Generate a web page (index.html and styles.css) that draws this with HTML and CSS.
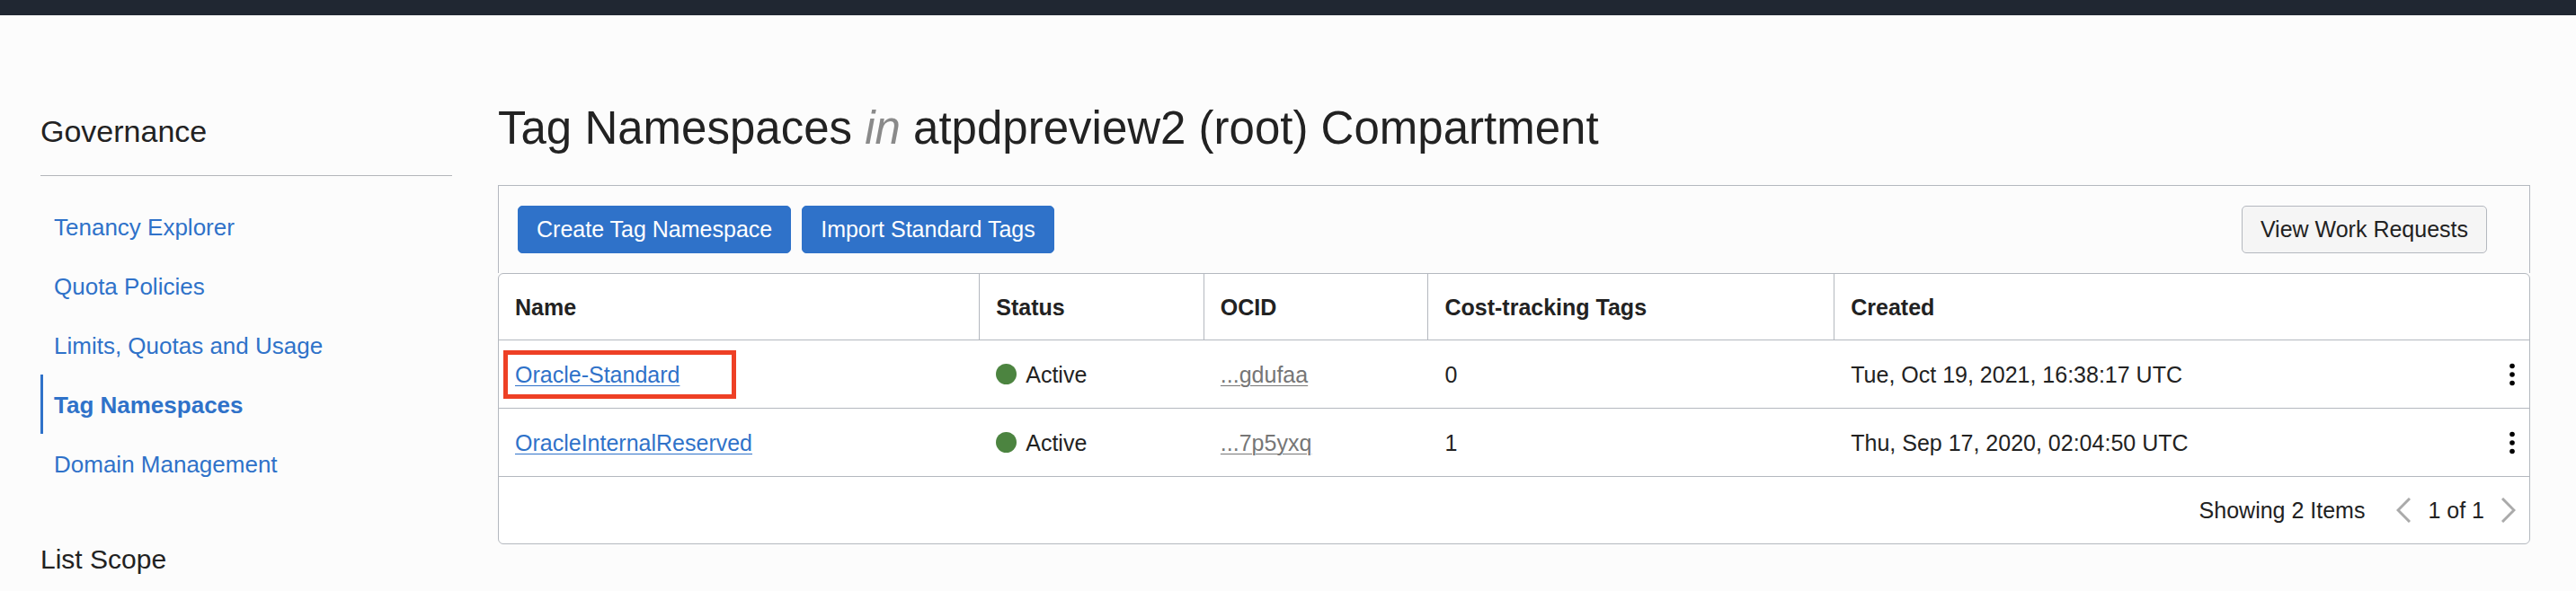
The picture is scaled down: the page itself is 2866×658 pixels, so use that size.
FILE: index.html
```html
<!DOCTYPE html>
<html lang="en">
<head>
<meta charset="utf-8">
<title>Tag Namespaces</title>
<link rel="stylesheet" href="styles.css">
</head>
<body>
<header class="topbar"></header>
<div class="layout">
  <aside class="sidebar">
    <h2 class="sidebar-title">Governance</h2>
    <nav class="nav" aria-label="Governance">
      <a class="nav-link" href="#explorer">Tenancy Explorer</a>
      <a class="nav-link" href="#quota">Quota Policies</a>
      <a class="nav-link" href="#limits">Limits, Quotas and Usage</a>
      <a class="nav-link active" href="#tags" aria-current="page">Tag Namespaces</a>
      <a class="nav-link" href="#domains">Domain Management</a>
    </nav>
    <h3 class="scope-title">List Scope</h3>
  </aside>
  <main class="main">
    <h1 class="title">Tag Namespaces <em class="title-in">in</em> atpdpreview2 (root) Compartment</h1>
    <div class="toolbar">
      <button class="btn primary" type="button">Create Tag Namespace</button>
      <button class="btn primary" type="button">Import Standard Tags</button>
      <button class="btn secondary" type="button">View Work Requests</button>
    </div>
    <section class="panel">
      <table class="grid">
        <colgroup>
          <col class="col-name"><col class="col-status"><col class="col-ocid"><col class="col-cost"><col><col class="col-actions">
        </colgroup>
        <thead>
          <tr><th>Name</th><th>Status</th><th>OCID</th><th>Cost-tracking Tags</th><th colspan="2">Created</th></tr>
        </thead>
        <tbody>
          <tr>
            <td class="marked"><a class="name-link" href="#standard">Oracle-Standard</a></td>
            <td><span class="status"><span class="dot"></span>Active</span></td>
            <td><a class="ocid" href="#ocid1">...gdufaa</a></td>
            <td>0</td>
            <td>Tue, Oct 19, 2021, 16:38:17 UTC</td>
            <td class="actions"><button class="icon-btn" type="button" aria-label="Actions for Oracle-Standard"><svg width="6" height="26" viewBox="0 0 6 26"><circle cx="3" cy="3.5" r="2.8"/><circle cx="3" cy="13" r="2.8"/><circle cx="3" cy="22.5" r="2.8"/></svg></button></td>
          </tr>
          <tr>
            <td><a class="name-link" href="#reserved">OracleInternalReserved</a></td>
            <td><span class="status"><span class="dot"></span>Active</span></td>
            <td><a class="ocid" href="#ocid2">...7p5yxq</a></td>
            <td>1</td>
            <td>Thu, Sep 17, 2020, 02:04:50 UTC</td>
            <td class="actions"><button class="icon-btn" type="button" aria-label="Actions for OracleInternalReserved"><svg width="6" height="26" viewBox="0 0 6 26"><circle cx="3" cy="3.5" r="2.8"/><circle cx="3" cy="13" r="2.8"/><circle cx="3" cy="22.5" r="2.8"/></svg></button></td>
          </tr>
        </tbody>
      </table>
      <div class="pager">
        <span class="count">Showing 2 Items</span>
        <button class="icon-btn" type="button" aria-label="Previous page"><svg class="chevron" width="16" height="28" viewBox="0 0 16 28"><path d="M15 1 2 14l13 13"/></svg></button>
        <span>1 of 1</span>
        <button class="icon-btn" type="button" aria-label="Next page"><svg class="chevron" width="16" height="28" viewBox="0 0 16 28"><path d="M1 1l13 13L1 27"/></svg></button>
      </div>
    </section>
  </main>
</div>
</body>
</html>
```
FILE: styles.css
```css
*, *::before, *::after { box-sizing: border-box; }

body {
  margin: 0;
  background: #fcfcfc;
  color: #222;
  font: 25px/30px "Liberation Sans", Arial, sans-serif;
}

button { font: inherit; cursor: pointer; }

.topbar { height: 17px; background: #202732; }

.layout { display: flex; gap: 51px; padding: 0 51px 0 45px; }

/* Sidebar */
.sidebar { flex: 0 0 458px; padding-top: 109px; }
.sidebar-title {
  margin: 0 0 23px;
  padding-bottom: 29px;
  border-bottom: 1px solid #b4b6ba;
  font-size: 34px;
  line-height: 40px;
  font-weight: 300;
}
.nav { display: flex; flex-direction: column; }
.nav-link {
  padding: 2px 0 0 12px;
  border-left: 3px solid transparent;
  color: #2f72c9;
  font-size: 26px;
  line-height: 64px;
  text-decoration: none;
}
.nav-link.active { border-left-color: #2f72c9; font-weight: 700; }
.scope-title { margin: 56px 0 0; font-size: 30px; line-height: 36px; font-weight: 300; }

/* Main column */
.main { flex: 1; min-width: 0; padding-top: 94px; }
.title { margin: 0 0 31px; font-size: 51px; line-height: 64px; font-weight: 400; }
.title-in { color: #8a8a8a; }

.toolbar {
  display: flex;
  gap: 12px;
  padding: 22px 47px 22px 21px;
  border: 1px solid #b4b8bf;
  border-bottom: 0;
}
.btn {
  padding: 11px 20px;
  border: 1px solid #2f72c9;
  border-radius: 5px;
  line-height: 29px;
}
.primary { background: #2f72c9; color: #fff; }
.secondary { margin-left: auto; border-color: #b4b8bf; background: #f5f5f5; color: #222; }

.panel { border: 1px solid #b4b8bf; border-radius: 6px; background: #fff; }

.grid { width: 100%; table-layout: fixed; border-collapse: separate; border-spacing: 0; }
.col-name { width: 23.65%; }
.col-status, .col-ocid { width: 11.05%; }
.col-cost { width: 20%; }
.col-actions { width: 56px; }
.grid th, .grid td {
  padding: 0 18px;
  border-bottom: 1px solid #b4b8bf;
  text-align: left;
  vertical-align: middle;
}
.grid th { height: 74px; }
.grid th + th { border-left: 1px solid #b4b8bf; }
.grid td { height: 76px; }
.grid td + td { padding-left: 19px; }

.name-link, .ocid { text-decoration-thickness: 1px; text-underline-offset: 3px; }
.name-link { color: #2f72c9; }
.ocid { color: #767676; }

/* Highlight frame drawn over the first row */
.marked { position: relative; }
.marked::after {
  content: "";
  position: absolute;
  inset: 11px auto auto 5px;
  width: 259px;
  height: 54px;
  border: 5px solid #ee4025;
  pointer-events: none;
}

.status { display: flex; align-items: center; gap: 10px; }
.dot { width: 23px; height: 23px; border-radius: 50%; background: #4c8440; }

.icon-btn { display: flex; padding: 0; border: 0; background: none; }
.grid .actions { padding: 0 16px; }
.actions .icon-btn { margin-left: auto; }
.chevron { fill: none; stroke: #aaa; stroke-width: 3; }

.pager {
  display: flex;
  align-items: center;
  justify-content: flex-end;
  gap: 19px;
  height: 74px;
  padding-right: 15px;
}
.count { margin-right: 16px; }
```
